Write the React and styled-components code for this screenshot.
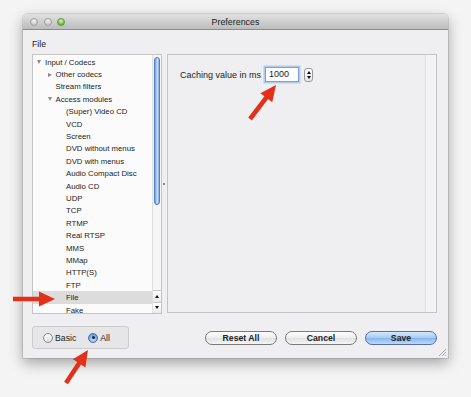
import React from 'react'
import styled, { createGlobalStyle } from 'styled-components'

const GlobalStyle = createGlobalStyle`
  html, body { margin: 0; padding: 0; }
  body {
    background: #f4f4f4;
    font-family: 'Liberation Sans', Arial, sans-serif;
    color: #1c1c1c;
  }
`

const Page = styled.div`
  position: relative;
  width: 471px;
  height: 397px;
  padding: 14px 0 0 23px;
  box-sizing: border-box;
`

const Window = styled.div`
  position: relative;
  width: 425px;
  height: 344px;
  display: flex;
  flex-direction: column;
  background: #efeef0;
  border-radius: 5px 5px 0 0;
  box-shadow: 0 5px 14px rgba(0, 0, 0, 0.34), 0 0 0 1px rgba(0, 0, 0, 0.1);
  overflow: hidden;
`

const TitleBar = styled.div`
  flex: none;
  height: 15px;
  display: grid;
  grid-template-columns: 1fr auto 1fr;
  align-items: center;
  padding: 0 7px;
  background: linear-gradient(#e2e2e2, #bcbcbc);
  border-bottom: 1px solid #8c8c8c;
`

const Lights = styled.div`
  display: flex;
  gap: 5.5px;
`

const Light = styled.span`
  width: 8px;
  height: 8px;
  border-radius: 50%;
  box-sizing: border-box;
  border: 1px solid ${p => (p.$on ? '#5b9a3c' : '#a2a2a2')};
  background: ${p =>
    p.$on
      ? 'radial-gradient(circle at 50% 30%, #d8f5b8, #7cc24c 60%, #5a9e32)'
      : 'radial-gradient(circle at 50% 30%, #f4f4f4, #cfcfcf 60%, #b8b8b8)'};
`

const Title = styled.div`
  font-size: 8.9px;
  color: #222;
`

const Body = styled.div`
  flex: 1;
  display: flex;
  flex-direction: column;
  padding: 0 11px 0 9px;
`

const Header = styled.div`
  font-size: 8.7px;
  line-height: 12px;
  margin: 8px 0 4px;
`

const Panes = styled.div`
  display: flex;
  height: 260px;
`

const TreePanel = styled.div`
  width: 130px;
  flex: none;
  display: flex;
  box-sizing: border-box;
  border: 1px solid #c4c4c4;
  background: #fbfbfb;
`

const List = styled.div`
  flex: 1;
  padding-top: 1px;
  overflow: hidden;
`

const Row = styled.div`
  height: 12.4px;
  display: flex;
  align-items: center;
  padding-left: ${p => 4 + p.$level * 10.5}px;
  font-size: 7.8px;
  white-space: nowrap;
  background: ${p => (p.$selected ? '#dcdddb' : 'transparent')};
`

const Twisty = styled.span`
  width: 8px;
  flex: none;
  display: flex;
  align-items: center;
`

const Down = styled.span`
  width: 0;
  height: 0;
  border-left: 2.5px solid transparent;
  border-right: 2.5px solid transparent;
  border-top: 4px solid #8a8a8a;
`

const Right = styled.span`
  width: 0;
  height: 0;
  border-top: 2.5px solid transparent;
  border-bottom: 2.5px solid transparent;
  border-left: 4px solid #8a8a8a;
`

const ScrollBar = styled.div`
  width: 8px;
  flex: none;
  display: flex;
  flex-direction: column;
  border-left: 1px solid #e0e0e0;
  background: #f6f6f6;
`

const Track = styled.div`
  flex: 1;
`

const Thumb = styled.div`
  width: 6px;
  height: 148px;
  margin: 2px 0 0 0.5px;
  border-radius: 3px;
  box-sizing: border-box;
  border: 1px solid #4d7fcc;
  background: linear-gradient(90deg, #6b9de2, #b5d1f5 45%, #d6e6fa 55%, #7aa6e6);
`

const StepArrow = styled.div`
  height: 10.5px;
  display: flex;
  align-items: center;
  justify-content: center;
  border-top: 1px solid #c8c8c8;
  background: linear-gradient(#ffffff, #e9e9e9);
`

const TinyUp = styled.span`
  width: 0;
  height: 0;
  border-left: 2px solid transparent;
  border-right: 2px solid transparent;
  border-bottom: 3px solid #111;
`

const TinyDown = styled.span`
  width: 0;
  height: 0;
  border-left: 2px solid transparent;
  border-right: 2px solid transparent;
  border-top: 3px solid #111;
`

const Splitter = styled.div`
  width: 5px;
  flex: none;
  display: flex;
  align-items: center;
  justify-content: flex-start;
  padding-left: 1px;
  box-sizing: border-box;
`

const Grip = styled.span`
  width: 2px;
  height: 2px;
  background: #8a8a8a;
`

const SettingsPanel = styled.div`
  flex: 1;
  display: flex;
  height: 259px;
  box-sizing: border-box;
  border: 1px solid #c4c4c4;
  background: #efeef0;
`

const Settings = styled.div`
  flex: 1;
  padding: 12px 0 0 12px;
`

const Gutter = styled.div`
  width: 10px;
  flex: none;
  border-left: 1px solid #dedede;
  background: #f3f2f4;
`

const Field = styled.div`
  display: flex;
  align-items: center;
`

const Label = styled.span`
  font-size: 9px;
  margin-right: 4px;
`

const NumberInput = styled.div`
  width: 34px;
  height: 15px;
  box-sizing: border-box;
  border: 1px solid #7f9fd3;
  box-shadow: 0 0 0 1.5px #b2cbee;
  background: #fff;
  font-size: 9px;
  line-height: 13px;
  padding-left: 3px;
`

const Stepper = styled.div`
  width: 9px;
  height: 14px;
  margin-left: 5px;
  box-sizing: border-box;
  border: 1px solid #9a9a9a;
  border-radius: 3px;
  background: linear-gradient(#ffffff, #e6e6e6);
  display: flex;
  flex-direction: column;
  align-items: center;
  justify-content: center;
  gap: 2px;
`

const Footer = styled.div`
  display: flex;
  align-items: center;
  height: 23px;
  margin-top: 12px;
`

const RadioGroup = styled.div`
  width: 97px;
  height: 23px;
  box-sizing: border-box;
  display: flex;
  align-items: center;
  padding-left: 10px;
  border: 1px solid #cdcdcd;
  border-radius: 3px;
  background: #e6e5e8;
`

const RadioOption = styled.label`
  display: flex;
  align-items: center;
  gap: 2px;
  font-size: 8.7px;
  margin-right: 12px;
`

const RadioDot = styled.span`
  width: 10px;
  height: 10px;
  border-radius: 50%;
  box-sizing: border-box;
  display: flex;
  align-items: center;
  justify-content: center;
  border: 1px solid ${p => (p.$checked ? '#4a6aa6' : '#8a8a8a')};
  background: ${p =>
    p.$checked
      ? 'radial-gradient(circle at 50% 70%, #cfe2fa, #7eaeea 55%, #4f86d6)'
      : 'linear-gradient(#ffffff, #dedede)'};
  &::after {
    content: '';
    display: ${p => (p.$checked ? 'block' : 'none')};
    width: 3.5px;
    height: 3.5px;
    border-radius: 50%;
    background: #1b2638;
  }
`

const Buttons = styled.div`
  margin-left: auto;
  display: flex;
  gap: 8px;
  padding-top: 1px;
`

const Button = styled.button`
  width: 72px;
  height: 14px;
  padding: 0;
  box-sizing: border-box;
  border-radius: 7px;
  font-family: 'Liberation Sans', Arial, sans-serif;
  font-weight: bold;
  font-size: 8.7px;
  color: #222;
  border: 1px solid ${p => (p.$primary ? '#5a6ea8' : '#7a7a7a')};
  background: ${p =>
    p.$primary
      ? 'linear-gradient(#d6e8fb, #a5c9f2 50%, #86b5ee 51%, #bcdaf8)'
      : 'linear-gradient(#fdfdfd, #eeeeee 50%, #e0e0e0 51%, #f5f5f5)'};
`

const ResizeGrip = styled.svg`
  position: absolute;
  right: 1px;
  bottom: 1px;
`

const Overlay = styled.svg`
  position: absolute;
  left: 0;
  top: 0;
  pointer-events: none;
`

const tree = [
  { label: 'Input / Codecs', level: 0, twisty: 'down' },
  { label: 'Other codecs', level: 1, twisty: 'right' },
  { label: 'Stream filters', level: 1 },
  { label: 'Access modules', level: 1, twisty: 'down' },
  { label: '(Super) Video CD', level: 2 },
  { label: 'VCD', level: 2 },
  { label: 'Screen', level: 2 },
  { label: 'DVD without menus', level: 2 },
  { label: 'DVD with menus', level: 2 },
  { label: 'Audio Compact Disc', level: 2 },
  { label: 'Audio CD', level: 2 },
  { label: 'UDP', level: 2 },
  { label: 'TCP', level: 2 },
  { label: 'RTMP', level: 2 },
  { label: 'Real RTSP', level: 2 },
  { label: 'MMS', level: 2 },
  { label: 'MMap', level: 2 },
  { label: 'HTTP(S)', level: 2 },
  { label: 'FTP', level: 2 },
  { label: 'File', level: 2, selected: true },
  { label: 'Fake', level: 2 },
]

// red callout arrow, tail -> tip
const Arrow = ({ from, to }) => {
  const [x1, y1] = from
  const [x2, y2] = to
  const len = Math.hypot(x2 - x1, y2 - y1)
  const ux = (x2 - x1) / len
  const uy = (y2 - y1) / len
  const nx = -uy
  const ny = ux
  const shaft = 2.3
  const head = 7.5
  const headLen = 16
  const bx = x2 - ux * headLen
  const by = y2 - uy * headLen
  const pts = [
    [x1 + nx * shaft, y1 + ny * shaft],
    [bx + nx * shaft, by + ny * shaft],
    [bx + nx * head, by + ny * head],
    [x2, y2],
    [bx - nx * head, by - ny * head],
    [bx - nx * shaft, by - ny * shaft],
    [x1 - nx * shaft, y1 - ny * shaft],
  ]
  return <polygon points={pts.map(p => p.join(',')).join(' ')} fill="#e3301b" />
}

const App = () => (
  <Page>
    <GlobalStyle />
    <Window>
      <TitleBar>
        <Lights>
          <Light />
          <Light />
          <Light $on />
        </Lights>
        <Title>Preferences</Title>
        <span />
      </TitleBar>
      <Body>
        <Header>File</Header>
        <Panes>
          <TreePanel>
            <List>
              {tree.map(item => (
                <Row key={item.label} $level={item.level} $selected={item.selected}>
                  <Twisty>
                    {item.twisty === 'down' && <Down />}
                    {item.twisty === 'right' && <Right />}
                  </Twisty>
                  {item.label}
                </Row>
              ))}
            </List>
            <ScrollBar>
              <Track>
                <Thumb />
              </Track>
              <StepArrow>
                <TinyUp />
              </StepArrow>
              <StepArrow>
                <TinyDown />
              </StepArrow>
            </ScrollBar>
          </TreePanel>
          <Splitter>
            <Grip />
          </Splitter>
          <SettingsPanel>
            <Settings>
              <Field>
                <Label>Caching value in ms</Label>
                <NumberInput>1000</NumberInput>
                <Stepper>
                  <TinyUp />
                  <TinyDown />
                </Stepper>
              </Field>
            </Settings>
            <Gutter />
          </SettingsPanel>
        </Panes>
        <Footer>
          <RadioGroup>
            <RadioOption>
              <RadioDot />
              Basic
            </RadioOption>
            <RadioOption>
              <RadioDot $checked />
              All
            </RadioOption>
          </RadioGroup>
          <Buttons>
            <Button>Reset All</Button>
            <Button>Cancel</Button>
            <Button $primary>Save</Button>
          </Buttons>
        </Footer>
      </Body>
      <ResizeGrip width="9" height="9" viewBox="0 0 9 9">
        <path d="M8 1 L1 8 M8 4 L4 8 M8 7 L7 8" stroke="#9a9a9a" strokeWidth="0.8" />
      </ResizeGrip>
    </Window>
    <Overlay width="471" height="397">
      <Arrow from={[250, 119]} to={[276, 85]} />
      <Arrow from={[13, 299]} to={[55, 299]} />
      <Arrow from={[66, 383]} to={[88, 350]} />
    </Overlay>
  </Page>
)

export default App
